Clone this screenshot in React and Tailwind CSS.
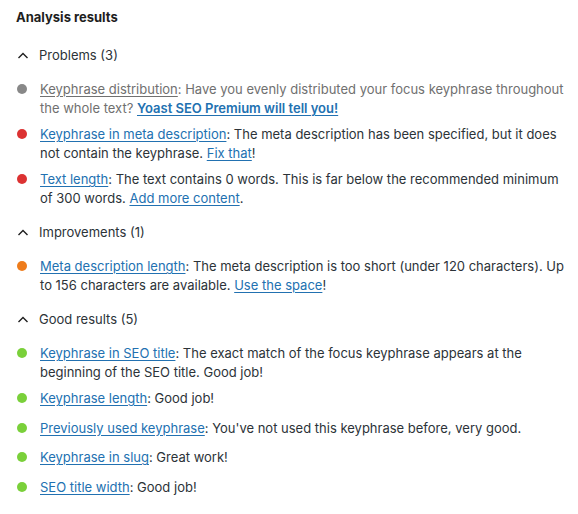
import React from "react";

const L = ({ children, bold }) => (
  <a
    href="#"
    className={
      "text-[#2271b1] underline underline-offset-[2px] decoration-1 " +
      (bold ? "font-semibold" : "")
    }
  >
    {children}
  </a>
);

const Chevron = () => (
  <svg width="16" height="16" viewBox="0 0 16 16" className="shrink-0" fill="none">
    <path d="M3.5 10 L8 5.5 L12.5 10" stroke="#1e1e1e" strokeWidth="1.4" />
  </svg>
);

const Item = ({ color, children, muted }) => (
  <li className="flex items-start min-h-[22.5px] mb-[7px]">
    <span className="w-[24px] shrink-0 flex">
      <span className={"mt-[4px] ml-px w-[10px] h-[10px] rounded-full " + color} />
    </span>
    <p className={"leading-[19px] " + (muted ? "text-[#707070]" : "text-[#2c3338]")}>{children}</p>
  </li>
);

const Section = ({ title, children }) => (
  <section className="pb-[2px]">
    <div className="flex items-center h-[32px]">
      <span className="w-[24px] flex -ml-px">
        <Chevron />
      </span>
      <span className="text-[#2c3338] text-[13px]">{title}</span>
    </div>
    <ul className="pt-[8px]">{children}</ul>
  </section>
);

export default function App() {
  return (
    <div
      className="bg-white w-[578px] h-[514px] pl-4 pr-[8px] pt-[7px] text-[13px]"
      style={{ fontFamily: 'Inter, "Noto Sans", sans-serif' }}
    >
      <h2 className="text-[13px] leading-[20px] font-bold text-[#1e1e1e] mb-[13px]">
        Analysis results
      </h2>
      <Section title="Problems (3)">
        <Item color="bg-[#888888]" muted>
          <a href="#" className="underline underline-offset-[2px] text-[#707070]">Keyphrase distribution</a>: Have you
          evenly distributed your focus keyphrase throughout the whole text?{" "}
          <L bold>Yoast SEO Premium will tell you!</L>
        </Item>
        <Item color="bg-[#dc3232]">
          <L>Keyphrase in meta description</L>: The meta description has been specified, but it does not
          contain the keyphrase. <L>Fix that</L>!
        </Item>
        <Item color="bg-[#dc3232]">
          <L>Text length</L>: The text contains 0 words. This is far below the recommended minimum of 300
          words. <L>Add more content</L>.
        </Item>
      </Section>
      <Section title="Improvements (1)">
        <Item color="bg-[#ee7c1b]">
          <L>Meta description length</L>: The meta description is too short (under 120 characters). Up to
          156 characters are available. <L>Use the space</L>!
        </Item>
      </Section>
      <Section title="Good results (5)">
        <Item color="bg-[#7ad03a]">
          <L>Keyphrase in SEO title</L>: The exact match of the focus keyphrase appears at the beginning of
          the SEO title. Good job!
        </Item>
        <Item color="bg-[#7ad03a]">
          <L>Keyphrase length</L>: Good job!
        </Item>
        <Item color="bg-[#7ad03a]">
          <L>Previously used keyphrase</L>: You've not used this keyphrase before, very good.
        </Item>
        <Item color="bg-[#7ad03a]">
          <L>Keyphrase in slug</L>: Great work!
        </Item>
        <Item color="bg-[#7ad03a]">
          <L>SEO title width</L>: Good job!
        </Item>
      </Section>
    </div>
  );
}
